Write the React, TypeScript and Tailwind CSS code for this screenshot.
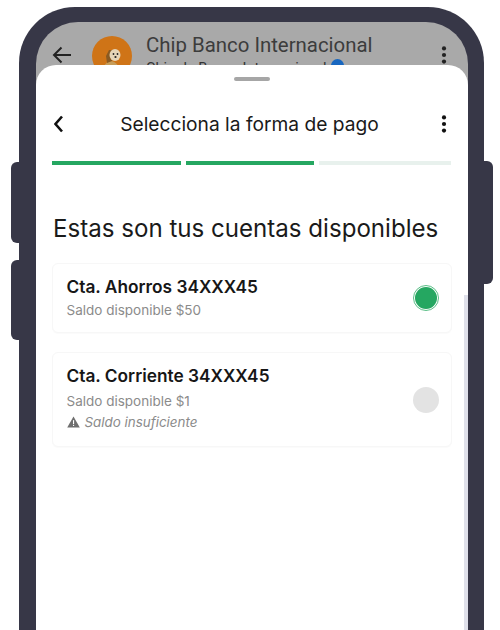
import React from "react";

const inter = "font-['Inter',sans-serif]";

function Kebab({ className = "" }: { className?: string }) {
  return (
    <svg width="6" height="20" viewBox="0 0 6 20" className={className}>
      <circle cx="3" cy="3.4" r="2.1" fill="currentColor" />
      <circle cx="3" cy="10" r="2.1" fill="currentColor" />
      <circle cx="3" cy="16.6" r="2.1" fill="currentColor" />
    </svg>
  );
}

function Progress() {
  return (
    <div className="mt-[25px] ml-[16px] mr-[17px] flex gap-[5px]">
      <div className="h-[4px] w-[129px] bg-[#25a761]" />
      <div className="h-[4px] w-[128px] bg-[#25a761]" />
      <div className="h-[4px] flex-1 bg-[#e8f1ed]" />
    </div>
  );
}

function Card({
  title,
  balance,
  warn,
  selected,
  columnClass,
  balanceClass,
  heightClass,
}: {
  title: string;
  balance: string;
  warn?: string;
  selected?: boolean;
  columnClass: string;
  balanceClass: string;
  heightClass: string;
}) {
  return (
    <div className={`flex items-center justify-between rounded-[6px] border border-[#f7f7f7] bg-white pl-[13.5px] pr-[12px] shadow-[0_1px_1px_rgba(0,0,0,0.02)] ${heightClass}`}>
      <div className={`flex flex-col ${columnClass}`}>
        <div className="text-[17.3px] leading-[22px] font-semibold text-[#161616]">{title}</div>
        <div className={`text-[13.5px] leading-[18px] text-[#8b8b8b] ${balanceClass}`}>{balance}</div>
        {warn && (
          <div className="mt-[3px] flex items-center gap-[5px] text-[13.4px] leading-[18px] text-[#8b8b8b] italic">
            <svg width="13" height="12" viewBox="0 0 13 12">
              <path d="M6.5 0.5 L12.8 11.5 H0.2 Z" fill="#6f6f6f" />
              <rect x="6" y="4.2" width="1.1" height="3.8" fill="#fff" />
              <rect x="6" y="8.8" width="1.1" height="1.2" fill="#fff" />
            </svg>
            {warn}
          </div>
        )}
      </div>
      {selected ? (
        <div className="flex h-[26px] w-[26px] items-center justify-center rounded-full border border-[#5cbf88] bg-white">
          <div className="h-[22px] w-[22px] rounded-full bg-[#25a761]" />
        </div>
      ) : (
        <div className="h-[26px] w-[26px] rounded-full bg-[#e3e3e3]" />
      )}
    </div>
  );
}

export default function App() {
  return (
    <div className={`relative h-[630px] w-[500px] overflow-hidden bg-white ${inter}`}>
      <div className="absolute left-[11px] top-[162px] h-[81px] w-[12px] rounded-l-[6px] bg-[#373747]" />
      <div className="absolute left-[11px] top-[260px] h-[80px] w-[12px] rounded-l-[6px] bg-[#373747]" />
      <div className="absolute left-[480px] top-[161px] h-[123px] w-[13px] rounded-r-[6px] bg-[#373747]" />

      <div className="absolute left-[19px] top-[7px] h-[660px] w-[465px] rounded-t-[56px] bg-[#373747] px-[17px] pt-[15px] pr-[16px]">
        <div className="flex h-[660px] flex-col overflow-hidden rounded-t-[42px] bg-[#a9a9a9]">
          <div className="relative flex h-[43px] shrink-0 overflow-hidden">
            <svg width="22" height="20" viewBox="0 0 22 20" className="ml-[15px] mt-[23px] text-[#222]">
              <path d="M20 10 H3 M10.5 2.5 L3 10 L10.5 17.5" fill="none" stroke="currentColor" strokeWidth="2" />
            </svg>
            <svg width="40" height="40" viewBox="0 0 40 40" className="ml-[19px] mt-[14px] shrink-0">
              <circle cx="20" cy="20" r="20" fill="#cf7417" />
              <path d="M9 40 C10 31 13 27 18 25 C24 25 28 30 29 40 Z" fill="#c69c58" />
              <path d="M14 20 L17 14 L21 14 L20 25 L15 27 Z" fill="#8a5a22" />
              <ellipse cx="23" cy="19" rx="5.5" ry="6" fill="#e6d6b8" />
              <circle cx="21.5" cy="18" r="0.9" fill="#222" />
              <circle cx="25.5" cy="18" r="0.9" fill="#222" />
              <circle cx="23.5" cy="21" r="1.1" fill="#222" />
            </svg>
            <div className="ml-[14px] flex min-w-0 flex-col font-['Roboto',sans-serif] text-[#333]">
              <div className="mt-[10px] text-[20.4px] leading-[26px] whitespace-nowrap text-[#3c3c3c]">Chip Banco Internacional</div>
              <div className="mt-[2px] flex items-start gap-[4px] text-[14.5px] leading-[18px] whitespace-nowrap">
                Chip de Banco Internacional
                <span className="-mt-[1px] h-[13px] w-[13px] rounded-full bg-[#1867c0]" />
              </div>
            </div>
            <Kebab className="absolute left-[405px] top-[23px] text-[#222]" />
          </div>

          <div className="flex-1 rounded-t-[20px] bg-white">
            <div className="relative h-full">
              <div className="ml-[198px] mt-[12px] h-[4px] w-[36px] rounded-full bg-[#a6a6a6]" />
              <div className="mt-[31px] flex h-[24px] items-center pl-[17px] pr-[21px]">
                <svg width="11" height="18" viewBox="0 0 11 18" className="text-[#111]">
                  <path d="M9 1.5 L2.5 9 L9 16.5" fill="none" stroke="currentColor" strokeWidth="2.6" />
                </svg>
                <div className="flex-1 pr-[6px] text-center text-[19.2px] leading-[24px] whitespace-nowrap text-[#1a1a1a]">Selecciona la forma de pago</div>
                <Kebab className="text-[#111]" />
              </div>
              <Progress />
              <h1 className="mt-[49px] ml-[17px] text-[24.1px] leading-[30px] font-normal whitespace-nowrap text-[#1a1a1a]">
                Estas son tus cuentas disponibles
              </h1>
              <div className="mt-[19px] ml-[16px] mr-[16px] flex flex-col gap-[19px]">
                <Card title="Cta. Ahorros 34XXX45" balance="Saldo disponible $50" selected columnClass="pb-[2px]" balanceClass="mt-[3px]" heightClass="h-[70px]" />
                <Card title="Cta. Corriente 34XXX45" balance="Saldo disponible $1" warn="Saldo insuficiente" columnClass="pb-[4px]" balanceClass="mt-[5px]" heightClass="h-[95px]" />
              </div>
              <div className="absolute right-0 top-[218px] h-[400px] w-[4px] bg-[#dfe0ea]" />
            </div>
          </div>
        </div>
      </div>
    </div>
  );
}
